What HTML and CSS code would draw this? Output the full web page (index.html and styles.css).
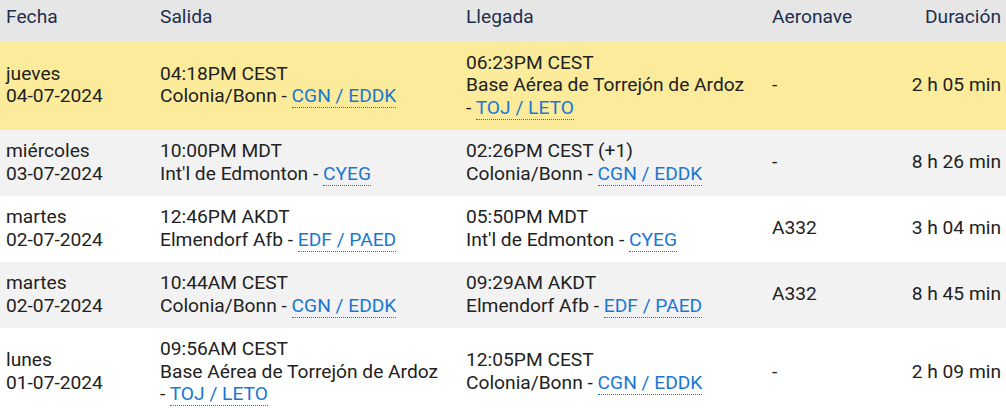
FILE: index.html
```html
<!DOCTYPE html>
<html lang="es">
<head>
<meta charset="utf-8">
<link rel="stylesheet" href="styles.css">
</head>
<body>
<table class="flights">
  <colgroup>
    <col class="c-date"><col class="c-dep"><col class="c-arr"><col class="c-ac"><col class="c-dur">
  </colgroup>
  <thead>
    <tr>
      <th>Fecha</th><th>Salida</th><th>Llegada</th><th>Aeronave</th><th class="r">Duración</th>
    </tr>
  </thead>
  <tbody>
    <tr class="hl">
      <td>jueves<br>04-07-2024</td>
      <td>04:18PM CEST<br>Colonia/Bonn - <a href="#">CGN / EDDK</a></td>
      <td>06:23PM CEST<br>Base Aérea de Torrejón de Ardoz<br>- <a href="#">TOJ / LETO</a></td>
      <td>-</td>
      <td class="r">2 h 05 min</td>
    </tr>
    <tr class="alt">
      <td>miércoles<br>03-07-2024</td>
      <td>10:00PM MDT<br>Int'l de Edmonton - <a href="#">CYEG</a></td>
      <td>02:26PM CEST (+1)<br>Colonia/Bonn - <a href="#">CGN / EDDK</a></td>
      <td>-</td>
      <td class="r">8 h 26 min</td>
    </tr>
    <tr>
      <td>martes<br>02-07-2024</td>
      <td>12:46PM AKDT<br>Elmendorf Afb - <a href="#">EDF / PAED</a></td>
      <td>05:50PM MDT<br>Int'l de Edmonton - <a href="#">CYEG</a></td>
      <td>A332</td>
      <td class="r">3 h 04 min</td>
    </tr>
    <tr class="alt">
      <td>martes<br>02-07-2024</td>
      <td>10:44AM CEST<br>Colonia/Bonn - <a href="#">CGN / EDDK</a></td>
      <td>09:29AM AKDT<br>Elmendorf Afb - <a href="#">EDF / PAED</a></td>
      <td>A332</td>
      <td class="r">8 h 45 min</td>
    </tr>
    <tr>
      <td>lunes<br>01-07-2024</td>
      <td>09:56AM CEST<br>Base Aérea de Torrejón de Ardoz<br>- <a href="#">TOJ / LETO</a></td>
      <td>12:05PM CEST<br>Colonia/Bonn - <a href="#">CGN / EDDK</a></td>
      <td>-</td>
      <td class="r">2 h 09 min</td>
    </tr>
  </tbody>
</table>
</body>
</html>
```
FILE: styles.css
```css
html, body {
  margin: 0;
  padding: 0;
  background: #ffffff;
}
body {
  font-family: Roboto, "Liberation Sans", sans-serif;
  font-size: 19.2px;
  color: #222222;
  overflow: hidden;
}
.flights {
  width: 1006px;
  border-collapse: collapse;
  table-layout: fixed;
}
.c-date { width: 154px; }
.c-dep { width: 306px; }
.c-arr { width: 306px; }
.c-ac { width: 120px; }
.c-dur { width: 120px; }
.flights th {
  background: #e6e6e6;
  color: #1d2f4f;
  font-weight: 400;
  text-align: left;
  line-height: 22px;
  padding: 6px 6px 13px 6px;
}
.flights td {
  line-height: 22.5px;
  padding: 10.5px 6px;
  vertical-align: middle;
  text-align: left;
}
.flights .r {
  text-align: right;
  padding-right: 5px;
}
.flights tr.hl td { background: #fbeb9b; }
.flights tr.alt td { background: #f2f2f2; }
.flights a {
  color: #1a78d2;
  text-decoration: none;
  border-bottom: 1px dotted #1a78d2;
}
```
